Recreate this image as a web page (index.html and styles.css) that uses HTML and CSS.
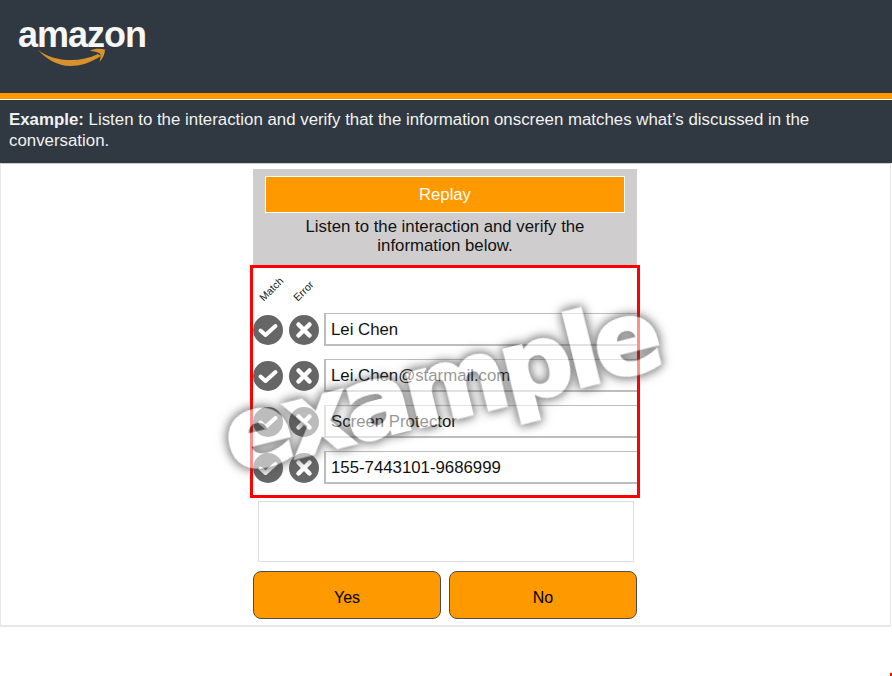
FILE: index.html
```html
<!DOCTYPE html>
<html lang="en">
<head>
    <meta charset="UTF-8">
    <meta name="viewport" content="width=device-width, initial-scale=1.0">
    <title>Example</title>
    <link rel="stylesheet" href="styles.css">
</head>
<body>
    <header class="brand">
        <div class="logo">
            <span class="logo-text">amazon</span>
            <svg class="logo-smile" width="72" height="20" viewBox="0 0 72 20">
                <path d="M2 2 C16 13 42 16 62 6 L65 8 C54 15 44 18 34 18 C22 18 10 11 2 2 Z" fill="#d8912c"/>
                <path d="M54 2.5 C59 0.5 64 0.5 69 1.5 C69 6 67 10 63.5 14 C64.5 10 65 8 64 5.5 C61 4 58 3.5 54 2.5 Z" fill="#d8912c"/>
            </svg>
        </div>
    </header>
    <div class="stripe"></div>
    <p class="intro"><strong>Example:</strong> Listen to the interaction and verify that the information onscreen matches what’s discussed in the conversation.</p>

    <main class="frame">
        <div class="task">
            <div class="task-head">
                <div class="replay">Replay</div>
                <p class="task-text">Listen to the interaction and verify the<br>information below.</p>
            </div>

            <div class="checks">
                <div class="labels">
                    <span class="label">Match</span>
                    <span class="label">Error</span>
                </div>

                <div class="row">
                    <svg class="mark" viewBox="0 0 30 30"><circle cx="15" cy="15" r="15"/><path class="tick" d="M7.5 15.5 L12.5 20 L22.5 11"/></svg>
                    <svg class="mark" viewBox="0 0 30 30"><circle cx="15" cy="15" r="15"/><path class="cross" d="M9.5 9.5 L20.5 20.5 M20.5 9.5 L9.5 20.5"/></svg>
                    <div class="field">Lei Chen</div>
                </div>
                <div class="row">
                    <svg class="mark" viewBox="0 0 30 30"><circle cx="15" cy="15" r="15"/><path class="tick" d="M7.5 15.5 L12.5 20 L22.5 11"/></svg>
                    <svg class="mark" viewBox="0 0 30 30"><circle cx="15" cy="15" r="15"/><path class="cross" d="M9.5 9.5 L20.5 20.5 M20.5 9.5 L9.5 20.5"/></svg>
                    <div class="field">Lei.Chen@starmail.com</div>
                </div>
                <div class="row">
                    <svg class="mark" viewBox="0 0 30 30"><circle cx="15" cy="15" r="15"/><path class="tick" d="M7.5 15.5 L12.5 20 L22.5 11"/></svg>
                    <svg class="mark" viewBox="0 0 30 30"><circle cx="15" cy="15" r="15"/><path class="cross" d="M9.5 9.5 L20.5 20.5 M20.5 9.5 L9.5 20.5"/></svg>
                    <div class="field">Screen Protector</div>
                </div>
                <div class="row">
                    <svg class="mark" viewBox="0 0 30 30"><circle cx="15" cy="15" r="15"/><path class="tick" d="M7.5 15.5 L12.5 20 L22.5 11"/></svg>
                    <svg class="mark" viewBox="0 0 30 30"><circle cx="15" cy="15" r="15"/><path class="cross" d="M9.5 9.5 L20.5 20.5 M20.5 9.5 L9.5 20.5"/></svg>
                    <div class="field">155-7443101-9686999</div>
                </div>
            </div>

            <div class="notes"></div>

            <div class="answers">
                <button class="answer">Yes</button>
                <button class="answer">No</button>
            </div>
        </div>
    </main>

    <div class="watermark">example</div>
    <div class="corner-dot"></div>
</body>
</html>
```

FILE: styles.css
```css
html, body {
    height: 676px;
    overflow: hidden;
}
body {
    font-family: "Liberation Sans", Arial, sans-serif;
    background: #fff;
    margin: 0;
    padding: 0;
    position: relative;
    color: #000;
}
.brand {
    background: #303841;
    height: 93px;
    padding: 15px 0 0 18px;
    box-sizing: border-box;
}
.logo {
    width: 130px;
    display: flex;
    flex-direction: column;
}
.logo-text {
    font-family: "Liberation Sans", Arial, sans-serif;
    font-weight: 700;
    font-size: 36px;
    line-height: 40px;
    letter-spacing: -1px;
    color: #f6f6f6;
}
.logo-smile {
    margin: -7px 0 0 18px;
}
.stripe {
    background: #ff9900;
    height: 6px;
    border-bottom: 1px solid #fff;
}
.intro {
    background: #303841;
    color: #f2f2f2;
    font-size: 16.85px;
    line-height: 21px;
    margin: 0;
    padding: 9px 9px 13px;
    height: 63px;
    box-sizing: border-box;
}
.frame {
    height: 464px;
    box-sizing: border-box;
    border: 1px solid #e8e8e8;
    border-top-color: #ccc;
    border-bottom-width: 2px;
    margin-right: 1px;
    padding-top: 5px;
}
.task {
    width: 384px;
    margin-left: 252px;
}
.task-head {
    background: #d0cdce;
    height: 96px;
    padding-top: 7px;
    box-sizing: border-box;
}
.replay {
    background: #ff9900;
    border: 1px solid #fff;
    color: #fff;
    width: 360px;
    height: 37px;
    margin-left: 12px;
    box-sizing: border-box;
    text-align: center;
    font-size: 16.7px;
    line-height: 35px;
}
.task-text {
    margin: 4px 0 0;
    font-size: 16.8px;
    line-height: 19px;
    text-align: center;
    color: #111;
}
.checks {
    width: 390px;
    height: 233px;
    margin-left: -3px;
    box-sizing: border-box;
    border: 3px solid #f00;
    background: #fff;
}
.labels {
    display: flex;
    height: 45px;
    padding-left: 3px;
}
.label {
    width: 34px;
    font-size: 10.5px;
    line-height: 12px;
    margin-top: 13px;
    height: 12px;
    color: #222;
    transform: rotate(-45deg);
}
.row {
    display: flex;
    align-items: center;
    gap: 6px;
    height: 33px;
    margin-bottom: 13px;
}
.mark {
    width: 30px;
    height: 30px;
    flex: none;
    fill: #666;
}
.tick, .cross {
    fill: none;
    stroke: #fff;
    stroke-linecap: round;
    stroke-linejoin: round;
}
.tick {
    stroke-width: 4;
}
.cross {
    stroke-width: 4.5;
}
.field {
    flex: 1;
    height: 33px;
    margin-left: -1px;
    box-sizing: border-box;
    border: 1px solid #bdbdbd;
    border-right: none;
    border-left-width: 2px;
    border-bottom-width: 2px;
    background: #fff;
    padding-left: 5px;
    font-size: 16.8px;
    line-height: 32px;
    color: #111;
}
.notes {
    width: 376px;
    height: 61px;
    margin: 3px 0 0 5px;
    box-sizing: border-box;
    border: 1px solid #dedede;
    background: #fff;
}
.answers {
    display: flex;
    gap: 8px;
    margin-top: 9px;
}
.answer {
    flex: 1;
    height: 48px;
    background: #ff9900;
    border: 1px solid #4d4d4d;
    border-radius: 8px;
    font-family: inherit;
    font-size: 16px;
    color: #000;
    padding: 5px 0 0;
}
/* watermark sits over the form */
.watermark {
    position: absolute;
    left: 180px;
    top: 327px;
    width: 520px;
    text-align: center;
    font-family: "DejaVu Sans", sans-serif;
    font-weight: 700;
    font-size: 100px;
    line-height: 120px;
    letter-spacing: -5px;
    color: #fff;
    -webkit-text-stroke: 3px #fff;
    filter: drop-shadow(0 0 5px #333) drop-shadow(0 0 4px #555);
    opacity: 0.56;
    transform: rotate(-14deg);
    pointer-events: none;
}
.corner-dot {
    position: absolute;
    left: 890px;
    top: 673px;
    width: 2px;
    height: 3px;
    background: #f00;
}
```
